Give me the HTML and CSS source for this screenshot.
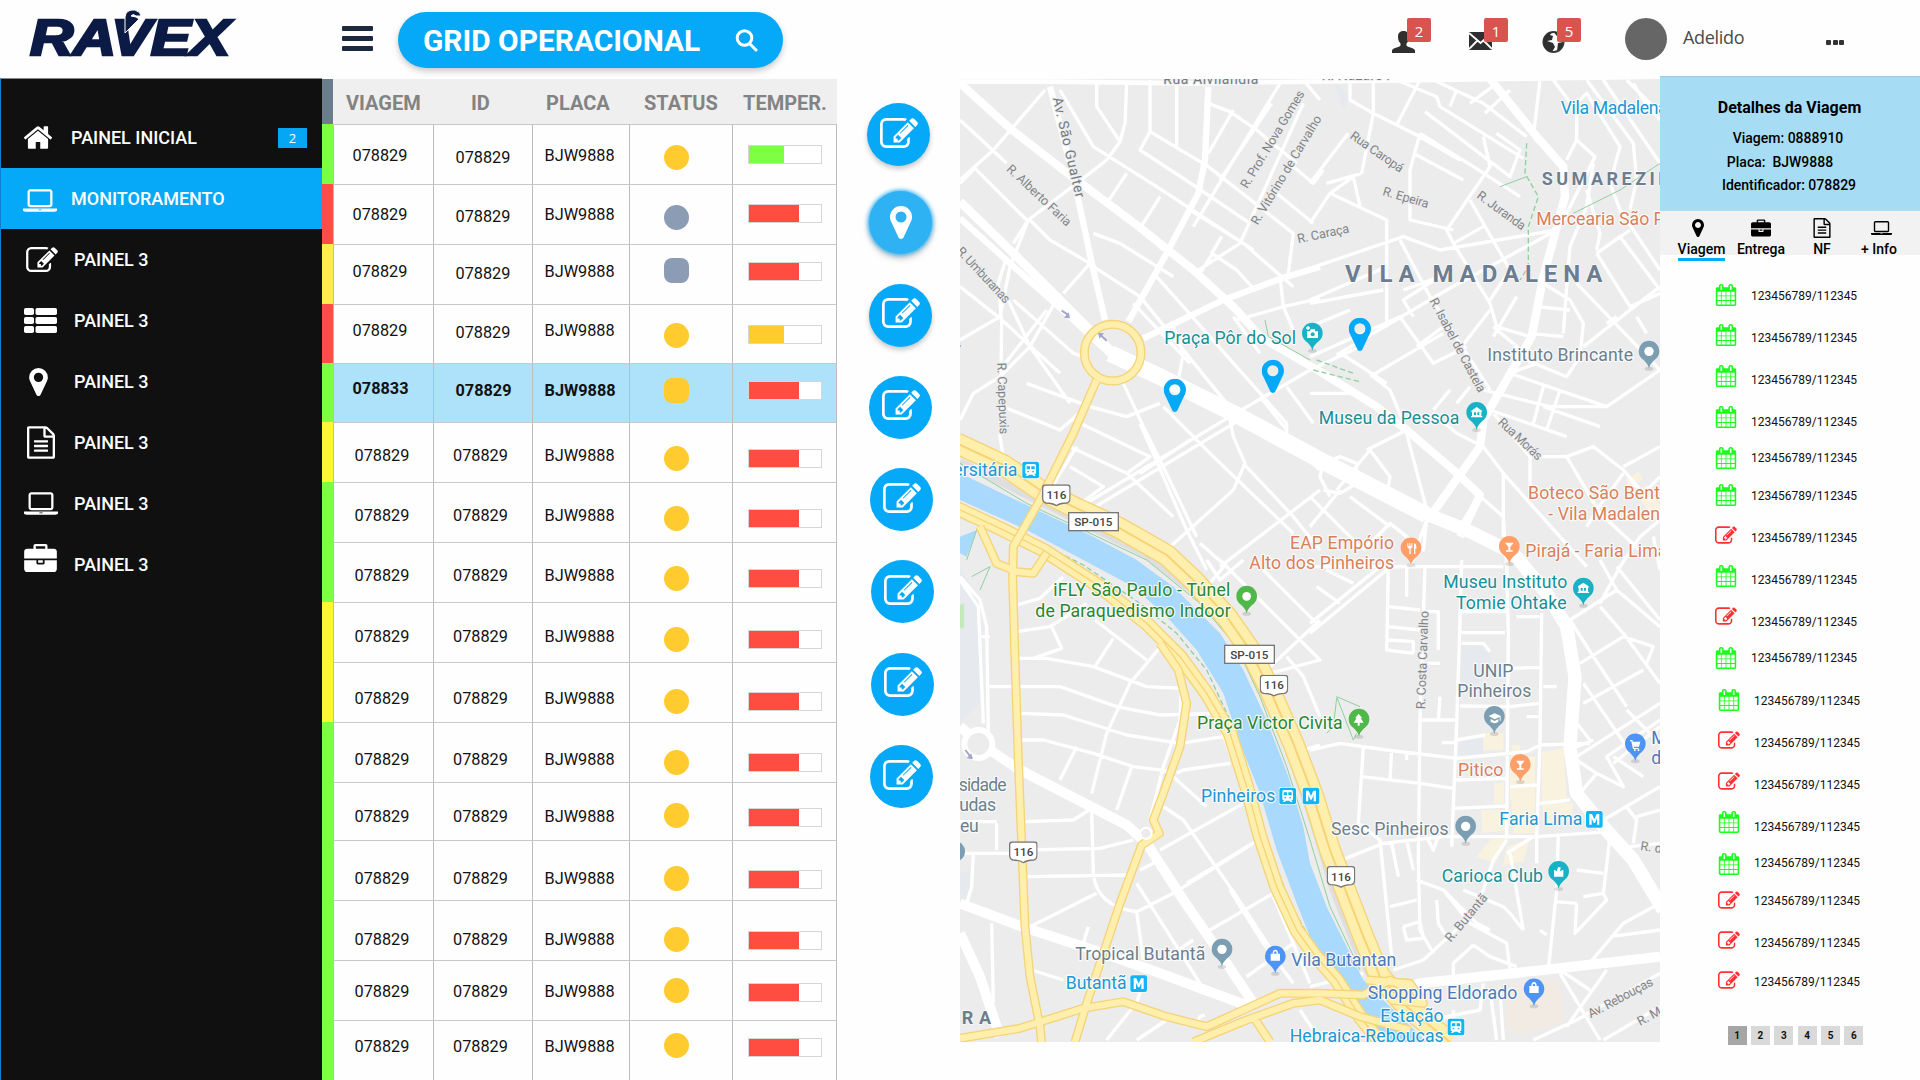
FILE: index.html
```html
<!DOCTYPE html>
<html lang="pt-BR">
<head>
<meta charset="utf-8">
<title>Ravex - Grid Operacional</title>
<link rel="stylesheet" href="styles.css">
</head>
<body>
<svg class="sprite" aria-hidden="true">
  <symbol id="i-home" viewBox="97 253 1598 1283"><path d="M1472 992v480q0 26-19 45t-45 19h-384v-384h-256v384h-384q-26 0-45-19t-19-45v-480q0-1 .5-3t.5-3l575-474 575 474q1 2 1 6zm223-69l-62 74q-8 9-21 11h-3q-13 0-21-7l-692-577-692 577q-12 8-24 7-13-2-21-11l-62-74q-8-10-7-23.5t11-21.5l719-599q32-26 76-26t76 26l244 204v-195q0-14 9-23t23-9h192q14 0 23 9t9 23v408l219 182q10 8 11 21.5t-7 23.5z"/></symbol>
  <symbol id="i-laptop" viewBox="0 256 1920 1280"><path d="M416 1280q-66 0-113-47t-47-113v-704q0-66 47-113t113-47h1088q66 0 113 47t47 113v704q0 66-47 113t-113 47h-1088zm-32-864v704q0 13 9.500 22.500t22.500 9.500h1088q13 0 22.500-9.500t9.500-22.500v-704q0-13-9.500-22.500t-22.500-9.500h-1088q-13 0-22.500 9.500t-9.500 22.500zm1376 928h160v96q0 40-47 68t-113 28h-1600q-66 0-113-28t-47-68v-96h1760zm-720 96q16 0 16-16t-16-16h-160q-16 0-16 16t16 16h160z"/></symbol>
  <symbol id="i-edit" viewBox="0 128 1792 1408"><path d="M888 1184l116-116-152-152-116 116v56h96v96h56zm440-720q-16-16-33 1l-350 350q-17 17-1 33t33-1l350-350q17-17 1-33zm80 594v190q0 119-84.500 203.500t-203.500 84.500h-832q-119 0-203.500-84.500t-84.500-203.500v-832q0-119 84.500-203.500t203.500-84.500h832q63 0 117 25 15 7 18 23 3 17-9 29l-49 49q-14 14-32 8-23-6-45-6h-832q-66 0-113 47t-47 113v832q0 66 47 113t113 47h832q66 0 113-47t47-113v-126q0-13 9-22l64-64q15-15 35-7t20 29zm-96-738l288 288-672 672h-288v-288zm444 132l-92 92-288-288 92-92q28-28 68-28t68 28l152 152q28 28 28 68t-28 68z"/></symbol>
  <symbol id="i-list" viewBox="0 0 33 25"><rect width="10" height="7" rx="1.800"/><rect x="11.500" width="21.500" height="7" rx="1.800"/><rect y="9" width="10" height="7" rx="1.800"/><rect x="11.500" y="9" width="21.500" height="7" rx="1.800"/><rect y="18" width="10" height="7" rx="1.800"/><rect x="11.500" y="18" width="21.500" height="7" rx="1.800"/></symbol>
  <symbol id="i-pin" viewBox="384 128 1024 1536"><path d="M1152 640q0-106-75-181t-181-75-181 75-75 181 75 181 181 75 181-75 75-181zm256 0q0 109-33 179l-364 774q-16 33-47.500 52t-67.500 19-67.500-19-46.500-52l-365-774q-33-70-33-179 0-212 150-362t362-150 362 150 150 362z"/></symbol>
  <symbol id="i-file" viewBox="128 0 1536 1792"><path d="M1596 380q28 28 48 76t20 88v1152q0 40-28 68t-68 28h-1344q-40 0-68-28t-28-68v-1600q0-40 28-68t68-28h896q40 0 88 20t76 48zm-444-244v376h376q-10-29-22-41l-313-313q-12-12-41-22zm384 1528v-1024h-416q-40 0-68-28t-28-68v-416h-768v1536h1280zm-1024-864q0-14 9-23t23-9h704q14 0 23 9t9 23v64q0 14-9 23t-23 9h-704q-14 0-23-9t-9-23v-64zm736 224q14 0 23 9t9 23v64q0 14-9 23t-23 9h-704q-14 0-23-9t-9-23v-64q0-14 9-23t23-9h704zm0 256q14 0 23 9t9 23v64q0 14-9 23t-23 9h-704q-14 0-23-9t-9-23v-64q0-14 9-23t23-9h704z"/></symbol>
  <symbol id="i-case" viewBox="0 0 1792 1536"><path d="M640 256h512v-128h-512v128zm1152 640v480q0 66-47 113t-113 47h-1472q-66 0-113-47t-47-113v-480h672v160q0 26 19 45t45 19h320q26 0 45-19t19-45v-160h672zm-768 0v128h-256v-128h256zm768-480v384h-1792v-384q0-66 47-113t113-47h352v-160q0-40 28-68t68-28h576q40 0 68 28t28 68v160h352q66 0 113 47t47 113z"/></symbol>
  <symbol id="i-cal" viewBox="64 0 1664 1792"><path d="M192 1664h288v-288h-288v288zm352 0h320v-288h-320v288zm-352-352h288v-320h-288v320zm352 0h320v-320h-320v320zm-352-384h288v-288h-288v288zm736 736h320v-288h-320v288zm-384-736h320v-288h-320v288zm768 736h288v-288h-288v288zm-384-352h320v-320h-320v320zm-352-864v-288q0-13-9.500-22.500t-22.500-9.500h-64q-13 0-22.500 9.500t-9.500 22.500v288q0 13 9.500 22.500t22.500 9.500h64q13 0 22.500-9.500t9.500-22.500zm736 864h288v-320h-288v320zm-384-384h320v-288h-320v288zm384 0h288v-288h-288v288zm32-480v-288q0-13-9.500-22.500t-22.500-9.500h-64q-13 0-22.500 9.500t-9.500 22.500v288q0 13 9.500 22.500t22.500 9.500h64q13 0 22.500-9.500t9.500-22.500zm384-64v1280q0 52-38 90t-90 38h-1408q-52 0-90-38t-38-90v-1280q0-52 38-90t90-38h128v-96q0-66 47-113t113-47h64q66 0 113 47t47 113v96h384v-96q0-66 47-113t113-47h64q66 0 113 47t47 113v96h128q52 0 90 38t38 90z"/></symbol>
  <symbol id="m-pin" viewBox="-32 -32 64 86" overflow="visible"><ellipse class="pin-shadow" cx="0" cy="52" rx="13" ry="6"/><path d="M0 52C-3 38-10 32-20 23A31 31 0 1 1 20 23C10 32 3 38 0 52z"/></symbol>
  <symbol id="m-metro" viewBox="0 0 54 54"><rect width="54" height="54" rx="8" fill="#fff"/><rect x="2" y="2" width="50" height="50" rx="6" fill="#12b5f5"/><path d="M12 43V11h8l7 16 7-16h8v32h-7V24l-6 14h-4l-6-14v19z" fill="#fff"/></symbol>
  <symbol id="m-train" viewBox="0 0 54 54"><rect width="54" height="54" rx="8" fill="#fff"/><rect x="2" y="2" width="50" height="50" rx="6" fill="#12b5f5"/><path fill-rule="evenodd" d="M11 14q0-5 6-5h20q6 0 6 5v22q0 4-5 4l4 5h-6l-4-4H22l-4 4h-6l4-5q-5 0-5-4zM15 16v9h10v-9zm14 0v9h10v-9zM17 30v4h5v-4zm15 0v4h5v-4z" fill="#fff"/></symbol>
  <symbol id="m-shield" viewBox="0 0 86 66"><path d="M10 2H76Q84 2 84 10V42Q84 54 74 56Q54 56 43 64Q32 56 12 56Q2 54 2 42V10Q2 2 10 2z" fill="#fff" stroke="#777" stroke-width="4"/><text x="43" y="44" font-size="35" font-weight="500" text-anchor="middle" fill="#444">116</text></symbol>
</svg>

<header class="topbar">
  <svg class="logo" viewBox="0 0 230 60" role="img" aria-label="Ravex">
    <text class="logo-text" transform="translate(6 47) scale(1.2 1)" textLength="167">RAVEX</text>
    <path d="M101 25V9Q102 1 111 2q6 2 6 6h-5q-3-3-5 0l5 1 3 2z" class="logo-hook"/>
  </svg>
  <button class="burger" aria-label="Menu"><span></span><span></span><span></span></button>
  <div class="search-pill"><h1>GRID OPERACIONAL</h1>
    <svg viewBox="0 0 23 23"><circle cx="9.500" cy="9" r="7.300"/><path d="M14.500 14.500l6.500 6.500"/></svg>
  </div>
  <nav class="notices">
    <a class="notice"><svg viewBox="0 0 23 22"><path d="M11.500 0c4 0 5.500 2.500 5.500 6 0 3-1 5-2.500 6.500v2c1 2 8.500 2 8.500 5.500v2H0v-2c0-3.500 7.500-3.500 8.500-5.500v-2C7 11 6 9 6 6c0-3.500 1.500-6 5.500-6z"/></svg><b>2</b></a>
    <a class="notice"><svg viewBox="0 0 23 22"><path d="M0 1h23v18H0z"/><path d="M0 2l11.500 10L23 2M0 18l8-8M23 18l-8-8" fill="none" stroke="#fff" stroke-width="1.800"/></svg><b>1</b></a>
    <a class="notice"><svg viewBox="0 0 23 22"><circle cx="11.500" cy="11" r="10" fill="#fff" stroke="#3a3a3a" stroke-width="2"/><path d="M2 7Q5 1 10 1L8 4l3 1-1 4-5 1 6 2 2 4-3 5Q2 19 1 12zM16 12l5-1q0 6-6 9zM12 1q7 1 9 7l-4-1-3-3z"/></svg><b>5</b></a>
  </nav>
  <div class="avatar"></div><span class="user">Adelido</span>
  <div class="more"><i></i><i></i><i></i></div>
</header>

<main class="layout">
  <aside class="sidebar">
    <a class="item first"><span class="ico"><svg class="w28"><use href="#i-home"/></svg></span>PAINEL INICIAL<em>2</em></a>
    <a class="item active"><span class="ico low"><svg class="w34"><use href="#i-laptop"/></svg></span>MONITORAMENTO</a>
    <a class="item"><span class="ico"><svg class="w32"><use href="#i-edit"/></svg></span>PAINEL 3</a>
    <a class="item"><span class="ico"><svg class="w33"><use href="#i-list"/></svg></span>PAINEL 3</a>
    <a class="item"><span class="ico"><svg class="w19"><use href="#i-pin"/></svg></span>PAINEL 3</a>
    <a class="item"><span class="ico"><svg class="w28 tall"><use href="#i-file"/></svg></span>PAINEL 3</a>
    <a class="item"><span class="ico"><svg class="w34"><use href="#i-laptop"/></svg></span>PAINEL 3</a>
    <a class="item"><span class="ico high"><svg class="w33 case"><use href="#i-case"/></svg></span>PAINEL 3</a>
  </aside>

  <section class="grid">
    <div class="thead"><i></i><b>VIAGEM</b><b>ID</b><b>PLACA</b><b>STATUS</b><b>TEMPER.</b></div>
    <div class="row green"><i></i><span>078829</span><span>078829</span><span>BJW9888</span><div><u class="dot"></u></div><div><s class="bar ok"></s></div></div>
    <div class="row red"><i></i><span>078829</span><span>078829</span><span>BJW9888</span><div><u class="dot off"></u></div><div><s class="bar"></s></div></div>
    <div class="row yellow"><i></i><span>078829</span><span>078829</span><span>BJW9888</span><div><u class="dot off sq"></u></div><div><s class="bar"></s></div></div>
    <div class="row red"><i></i><span>078829</span><span>078829</span><span>BJW9888</span><div><u class="dot"></u></div><div><s class="bar warn"></s></div></div>
    <div class="row green selected"><i></i><span>078833</span><span>078829</span><span>BJW9888</span><div><u class="dot sq"></u></div><div><s class="bar"></s></div></div>
    <div class="row bright"><i></i><span>078829</span><span>078829</span><span>BJW9888</span><div><u class="dot"></u></div><div><s class="bar"></s></div></div>
    <div class="row green"><i></i><span>078829</span><span>078829</span><span>BJW9888</span><div><u class="dot"></u></div><div><s class="bar"></s></div></div>
    <div class="row green"><i></i><span>078829</span><span>078829</span><span>BJW9888</span><div><u class="dot"></u></div><div><s class="bar"></s></div></div>
    <div class="row bright"><i></i><span>078829</span><span>078829</span><span>BJW9888</span><div><u class="dot"></u></div><div><s class="bar"></s></div></div>
    <div class="row bright"><i></i><span>078829</span><span>078829</span><span>BJW9888</span><div><u class="dot"></u></div><div><s class="bar"></s></div></div>
    <div class="row green"><i></i><span>078829</span><span>078829</span><span>BJW9888</span><div><u class="dot"></u></div><div><s class="bar"></s></div></div>
    <div class="row green"><i></i><span>078829</span><span>078829</span><span>BJW9888</span><div><u class="dot"></u></div><div><s class="bar"></s></div></div>
    <div class="row green"><i></i><span>078829</span><span>078829</span><span>BJW9888</span><div><u class="dot"></u></div><div><s class="bar"></s></div></div>
    <div class="row green"><i></i><span>078829</span><span>078829</span><span>BJW9888</span><div><u class="dot"></u></div><div><s class="bar"></s></div></div>
    <div class="row green"><i></i><span>078829</span><span>078829</span><span>BJW9888</span><div><u class="dot"></u></div><div><s class="bar"></s></div></div>
    <div class="row green"><i></i><span>078829</span><span>078829</span><span>BJW9888</span><div><u class="dot"></u></div><div><s class="bar"></s></div></div>
  </section>

  <nav class="actions">
    <button class="shadow"><svg><use href="#i-edit"/></svg></button>
    <button class="glow"><svg><use href="#i-pin"/></svg></button>
    <button class="shadow"><svg><use href="#i-edit"/></svg></button>
    <button><svg><use href="#i-edit"/></svg></button>
    <button><svg><use href="#i-edit"/></svg></button>
    <button><svg><use href="#i-edit"/></svg></button>
    <button><svg><use href="#i-edit"/></svg></button>
    <button><svg><use href="#i-edit"/></svg></button>
  </nav>

  <svg class="map" viewBox="0 27 2100 2889">
    <rect y="27" width="2100" height="2889" fill="#ececec"/>
    <path fill="#e6eaee" d="M0 1490L60 1600V1900L0 1960zM1505 1725l80 5 10 50-60 90h-35zM1500 2010l70-10v50l-75 5zM0 2410l30-10v90H0zM1120 30l50 50-20 40z"/>
    <path fill="#c5eab9" d="M0 1605l12-5v75H0z"/>
    <path fill="#f8f2df" d="M1570 1990h60v50h-60zM1602 2140h30v60h-30zM1655 2025h25v45h-25zM1650 2060h75v130h-75zM1745 2045l65-10 10 150-75 10zM1655 2160h70v80h-70zM1563 2220h75v60l-70 10zM1745 2200l95 0-5 40-80 20zM1550 2360l40-50 60-10-45 80zM1640 2330l70-25-20 70-60 10zM1995 1230l40-25 15 20-40 30zM2020 1265l40-20 40 60v60zM1660 2230h65v60h-65z"/>
    <path fill="#f1ebe4" d="M1645 2740l150-15 20 130-60 20-80 20-40-30z"/>

    <g class="streets">
      <path d="M0 330L100 240 255 60M0 340L45 295 200 450M0 150L140 280M300 60L400 230 590 350 880 540M410 30L410 110 480 215 495 160 500 40M480 215L440 270 350 340 205 450 160 520M210 450L270 510 390 580 310 670M140 560L115 640 125 760 120 1100 130 1160M205 450L150 590 120 740M570 30L570 185 540 240 700 345 870 460M650 40V235M570 185L745 290 1000 490 985 610M500 310L440 400 560 480M600 380L540 475 610 540M820 120L745 250M935 100L780 330M745 100L810 125 890 180 1010 280M960 40L700 470M690 420L850 520 1000 650M1030 100L840 520M840 520L700 610M785 500L755 550 830 600 880 655M720 610L755 555M1060 460L950 370M400 490L480 520 640 620M400 590L540 680 800 1000 820 1100 855 1180 820 1260M590 620L980 1060V1110L1080 1200M640 770L670 850 655 930M520 700L690 880M300 670L210 830 120 920 40 970 0 1050M120 740L0 810M140 680L210 830 330 1000M0 650L120 745 300 910M160 690L340 850 370 860M200 940L390 1010 500 1040 600 1000M130 1010L300 1080 380 1010M260 720L120 900M340 1050L570 1160 500 1210M330 1130L500 1210 640 1340M330 1190L430 1250 350 1310M270 1260L350 1130M540 1060L680 1380 740 1500M490 940L550 1070 600 1170 710 1400M370 1305L810 1040 1050 900 1200 830M390 1320L830 1055M610 1010L760 1160 1000 1390M1080 1260L780 1490M690 1110L540 1210M820 1260L620 1440M720 1420L800 1490M850 1180L1000 1340 1080 1440M980 950L1060 1060M900 980L980 1080M820 740L900 850M830 750L970 710 1080 685M960 620L970 710 1000 780M1000 290L1060 340 1090 300M1030 30L1080 90"/>
    </g>
    <g class="streets" transform="translate(1050 0)">
      <path d="M120 40L120 90 190 130 320 195 450 270M190 30L190 130 155 310M330 30L260 165M260 30L380 80 390 110 640 265M440 60L420 110M370 30L520 100 650 200M480 100L560 40M525 130L600 60M345 125L600 320 630 240 560 190M520 200L540 290 410 480 430 520M330 190L300 300 300 450 430 480M310 250L460 330M330 190L490 290 630 380M0 340L115 190M155 310L50 340M130 320L60 370 230 450 230 770M130 320L150 410M60 370L0 460M480 390L600 600 540 690M410 480L430 520 540 700 560 770 660 800M430 520L520 470M0 595L280 500 390 540 740 480M0 690L230 590M0 700L220 660M270 510L360 680 540 960M280 660L390 620 280 690 310 740M0 860L270 740 370 880 470 830M80 855L410 660 740 480M0 770L120 720M180 920L400 790M320 830L400 770M190 920L240 960 290 1080 170 1140M0 970L150 970M370 1030L440 1090 520 1130M370 1020L420 960M440 1000L480 950M100 855L230 940M620 680L550 800M540 720L440 850M680 710L780 720M660 790L760 800M700 640L780 690 820 760 810 860 770 920 600 850M770 650L760 790M550 770L680 880 600 910 890 1010 1050 900M520 960L720 1010 890 1010M540 1020L770 1100M700 950L670 1060M750 960L710 1080M700 1010L870 1070M800 640L1050 900M690 30L670 200M730 30L790 110 830 70 930 230 900 340 930 420 1050 600M830 30L970 220 980 330 960 420M880 30L1050 280M950 30L1050 130M970 40L1000 90 1050 150M770 270L800 210 855 260 760 450M800 210V110M850 280L830 410 780 530 770 650M860 550L960 480M860 550L960 710 1050 670M860 550L930 500 1050 660M830 360L870 490 860 540M890 760L920 740M980 740L1010 790M1050 650L820 830M550 1030L660 1160 770 1160 850 1130 940 1200 1000 1270 1050 1220M660 1160L660 1260M770 1160L870 1330 1000 1450M940 1210L860 1320 830 1370M940 1190L1050 1130M1020 1290L960 1230M520 1130L580 1210 580 1400M580 1210L830 1490M510 1270L450 1370M500 1270L580 1340 590 1490M180 1140L240 1220 230 1280M60 1280L30 1220 40 1180 90 1160 140 1180 140 1240 90 1270 40 1260M120 1280L240 1370M290 1090L350 1320M180 1140L80 1260M0 1280L150 1430M350 1350L340 1440 240 1360 160 1440M0 1370L90 1260M350 1350L300 1490M0 1490H580M930 1490L990 1400 1050 1350M1030 1400L1050 1500"/>
    </g>
    <g class="streets" transform="translate(0 1470)">
      <path d="M0 50L60 120 80 200 85 520M0 60L55 140 70 490M60 230H90M85 380H170M170 135L240 115 310 50M170 215L270 200 380 130M275 200L305 265 220 295M175 295H260L400 320 560 380 670 385M405 180L560 300M460 235L405 320M610 250L510 370 440 520 395 700M175 380H300L470 440 600 465 780 460M180 460L310 465 500 525 660 550 790 530M185 540H250L400 580 520 620 640 635M350 560L300 660M515 620L470 750M630 260L665 350 660 480 610 620 570 780M640 650L740 740M650 640L670 630 810 610M670 310L760 440 860 720M195 785L340 780 395 745M395 750L400 940Q410 1040 530 1055L640 1000 880 850M195 870L420 865 520 840M200 950L510 945M0 880H150M110 790V870M0 785H110M40 880L35 980 20 1030M210 1100L410 1000M530 1055L550 1200M530 970L720 1270M610 740L670 780 830 1010 960 1210M600 870L850 730M680 970L910 830M750 1110L940 1000M810 990L910 1150 1000 1270M860 1250L1000 1150M700 1140L640 1180M540 930L600 900M940 1010L1000 1150 1050 1270M95 1090L100 1330M370 1150L385 1100M215 1230L310 1260M550 1260L530 1330M780 1180L860 1310M440 1440L520 1340M530 1440L620 1380M710 1390L720 1370 735 1365M800 10L740 80M740 0L780 60 850 0M880 100L1080 300 930 340M930 320L1080 180M980 290L1030 350 1080 470M910 30L1080 200M1030 570L1080 555M780 0L880 100M1020 1350L1060 1410"/>
    </g>
    <g class="streets" transform="translate(1050 1470)">
      <path d="M0 190L210 20 330 20M0 220L230 30M50 30L130 70M20 80L90 130M235 20L230 270 310 280M235 140L330 150M235 200L330 210M235 240L310 245V280M345 20L330 480 325 900 330 1110 370 1180M290 20V110M345 155H385V270M340 310H390M455 0L450 180 440 490 425 860M450 155H590M450 218H585M455 250H520L540 275M590 0L595 220 590 830M620 170H700M695 160L690 540 680 830M600 325L690 322M700 380H740M450 438L600 440 690 430M650 470H690M335 480H440M390 410L385 480M440 540L525 525M395 548H440M0 570L90 550 230 570 440 595 650 575 690 555 840 550M160 560L145 790 210 840 245 1190M245 570L240 660M290 580V600M155 650L330 670 430 685M435 660L590 655M430 745L590 738M600 680L680 675M690 730L780 720M70 910L220 850 400 830 680 830 900 815M245 850L265 950M290 840L310 930M350 830L370 870 385 830M320 960L400 990 500 1090 540 1110M590 840L550 900 520 990 470 1080 340 1200 250 1230M590 880L670 830M600 880L640 1110M460 990L580 1040 600 1060 640 1110M400 990L480 1090 590 1150 600 1230M490 1155L540 1190 620 1220M490 1155L430 1210V1260M380 1020L385 1090 410 1130M280 1100L330 1085 340 1135 290 1140 280 1100M240 1040L320 1020M680 830V910M745 820L740 990 715 1230M735 1025L800 1030M800 1030L795 1120 890 1020 880 1000 900 830M800 930L880 940M690 1110L710 1125M820 1010L880 1000M830 1220L940 1090 1050 1030M900 1130L1050 1110M750 1240L870 1440M750 1230L840 1290M890 1230L770 1400M670 1440L800 1380 1050 1240M880 1440L1050 1340M540 1290L560 1440M570 1290L580 1440M360 1380L510 1350 520 1270M430 1380V1350M0 1280L160 1240M780 180L920 90 1050 200M870 0L920 90M930 20L870 130M870 140L940 220 1050 370M920 20L1050 180M940 230L810 310M940 230L1030 260 1010 310M780 180L850 290 950 440M1000 330L820 430M820 370L950 560M800 590L1050 430M800 560L850 540M800 490L840 540M1050 480L890 590 940 680 860 640 810 700M910 590L1000 650M1050 500L910 610M950 450L1030 530M880 780L1050 680M950 740L980 780 970 850M980 770L1050 750M800 600L860 640M960 860L1050 850"/>
    </g>

    <g class="majors">
      <path class="w14" d="M0 35H270L700 40 2100 20"/>
      <path class="w22" d="M0 40L150 175 310 300 530 465 700 600 830 720 900 800 1080 905 1250 1010 1340 1080 1480 1200 1560 1275 1500 1400"/>
      <path class="w24" d="M0 395L150 540 390 780 480 870"/>
      <path class="w18" d="M0 445L150 580 330 740 480 880"/>
      <path class="w50" d="M450 850L600 920 830 1035 1080 1170 1400 1335"/>
      <path class="w40" d="M1380 1325L1520 1380 1660 1450 1760 1570 1820 1670 1845 1820 1830 2030 1850 2170 1930 2270 2020 2370 2110 2520"/>
      <path class="w18" d="M270 50L340 320 400 600 435 750M745 50L735 270 715 370 620 550 505 755"/>
      <path class="w18" d="M550 805L790 690 965 625 1080 590"/>
      <path class="w26" d="M1585 20L1730 200 1810 290 1815 380 1750 620 1715 800 1570 1050 1560 1130 1410 1340"/>
      <path class="w30" d="M0 1970L60 2020 180 2100 500 2265 560 2320 670 2490 780 2650 880 2800"/>
      <path class="w30" d="M0 2500L200 2575 430 2650 600 2710 870 2810M0 2590L60 2720 120 2900M1290 2770L1380 2740 1750 2700 2100 2660"/>
      <circle cx="55" cy="2022" r="42" class="ring"/>
    </g>

    <path class="water" d="M0 1210L200 1305 400 1400 530 1470 640 1550 780 1690 850 1800 920 1950 985 2120 1030 2270 1050 2380 1100 2510 1160 2630 1210 2730 1290 2810 1400 2916H1270L1200 2810 1130 2710 1050 2600 1010 2500 950 2340 900 2170 840 2020 790 1870 710 1740 620 1640 520 1550 370 1470 200 1380 0 1290zM0 1400L50 1380 20 1460 0 1450z"/>
    <path class="rail" d="M0 1175L240 1295 560 1455 720 1580 840 1710 920 1860 990 2050 1060 2260 1120 2460 1190 2640 1260 2770"/>
    <path class="park" d="M0 1180L200 1300 560 1470 720 1600 830 1730 900 1880 980 2090 1050 2310 1110 2510 1200 2700"/>
    <path class="park dashed" d="M0 1305L180 1390 370 1485 540 1600 650 1690 740 1800 810 1950 860 2100 920 2310 990 2500 1080 2660"/>
    <path class="park dashed" d="M1700 220L1695 310 1735 380 1705 470V590L1680 630M1060 900L1200 935M1070 870L1180 910"/>
    <path class="park" d="M915 750L925 800 1050 870M1620 350L1700 320M1840 430L1980 360 2100 280M1130 1880L1180 2010 1190 1990M1130 1880L1200 1910M1130 1885L1120 1970 1100 1990M35 1520L90 1490 60 1560M20 1470L50 1380"/>

    <g class="hw-edge"><path id="hw1" d="M-10 1120L130 1185 240 1260 350 1315 480 1375 620 1455 700 1530 800 1640 870 1740 930 1860 1000 2020 1060 2180 1110 2340 1160 2470 1210 2600 1260 2720 1340 2810 1470 2916"/></g>
    <use href="#hw1" class="hw-fill"/><use href="#hw1" class="hw-mid"/>
    <g class="hw2-edge"><path id="hw2" d="M-10 1315L120 1375 250 1440 420 1550 560 1660 660 1760 740 1870 810 1990 860 2150 900 2300 950 2450 1010 2580 1060 2650 1130 2730 1200 2840 1260 2916"/></g>
    <use href="#hw2" class="hw2-fill"/><use href="#hw2" class="hw2-mid"/>
    <g class="yr-edge"><g id="yr">
      <path d="M410 930L340 1090 240 1290 160 1430 158 1530 165 1770 175 2070 185 2320 195 2570 210 2720 240 2870 245 2920"/>
      <circle cx="458" cy="848" r="85"/>
      <path d="M600 1720L655 1800 680 1900 660 2030 610 2170 580 2250 598 2290 545 2325 480 2500 430 2650 380 2800 345 2916"/>
      <path d="M0 2905L180 2875 370 2815 490 2795 620 2840 740 2870 850 2820 960 2770 1080 2770 1210 2775 1290 2730 1350 2760"/>
      <path d="M700 2916L860 2850 1000 2800 1080 2790 1200 2840 1350 2880M880 2840L930 2916M60 1370L110 1480 170 1505 220 1510 260 1450M1220 2730L1350 2740 1390 2800 1290 2790"/>
    </g></g>
    <use href="#yr" class="yr-fill"/>
    <circle cx="558" cy="2290" r="17" fill="#ececec" stroke="#fff" stroke-width="6"/>
    <path d="M305 722l22 14M440 812l-22-20M16 2040l20 26" stroke="#a3a6c9" stroke-width="6"/>
    <path d="M330 745l-18-2 14-16zM414 788l18 2-14 16zM38 2068l-18-4 14-14z" fill="#a3a6c9"/>

    <g class="labels road">
      <text class="dark" transform="translate(610 43)" textLength="285">Rua Alvilândia</text>
      <text class="dark" transform="translate(1085 31)" textLength="220">R. Nazaré P</text>
      <text transform="translate(278 85) rotate(77)" class="dark" textLength="308">Av. São Gualter</text>
      <text transform="translate(137 300) rotate(43)" textLength="250">R. Alberto Faria</text>
      <text transform="translate(-12 545) rotate(47)" textLength="215">R. Umburanas</text>
      <text transform="translate(112 878) rotate(88)" textLength="215">R. Capepuxis</text>
      <text transform="translate(862 358) rotate(-59)" textLength="335">R. Prof. Nova Gomes</text>
      <text transform="translate(893 467) rotate(-59)" textLength="375">R. Vitórino de Carvalho</text>
      <text transform="translate(1015 520) rotate(-12)" textLength="158">R. Caraça</text>
      <text transform="translate(1168 203) rotate(35)" textLength="185">Rua Caropá</text>
      <text transform="translate(1266 375) rotate(16)" textLength="142">R. Epeira</text>
      <text transform="translate(1548 382) rotate(36)" textLength="170">R. Juranda</text>
      <text transform="translate(1408 692) rotate(62)" textLength="315">R. Isabel de Castela</text>
      <text transform="translate(1612 1060) rotate(43)" textLength="165">Rua Morás</text>
      <text transform="translate(1395 1918) rotate(-88)" textLength="295">R. Costa Carvalho</text>
      <text transform="translate(1472 2618) rotate(-50)" textLength="175">R. Butantã</text>
      <text transform="translate(1892 2845) rotate(-28)" textLength="215">Av. Rebouças</text>
      <text transform="translate(2040 2868) rotate(-28)">R. Mo</text>
      <text transform="translate(2040 2340) rotate(8)">R. de</text>
      <text transform="translate(-12 838) rotate(-30)">e</text>
    </g>
    <g class="labels area">
      <text x="1745" y="344" font-size="54" textLength="388">SUMAREZIN</text>
      <text x="1155" y="636" font-size="72" textLength="772">VILA MADALENA</text>
      <text x="5" y="2862" font-size="54" textLength="88">RA</text>
    </g>
    <g class="labels teal">
      <text x="613" y="822" textLength="395">Praça Pôr do Sol</text>
      <text x="1076" y="1061" textLength="422">Museu da Pessoa</text>
      <text x="1450" y="1555" textLength="372">Museu Instituto</text>
      <text x="1488" y="1616" textLength="332">Tomie Ohtake</text>
      <text x="1445" y="2436" textLength="304">Carioca Club</text>
    </g>
    <g class="labels slate">
      <text x="1582" y="873" textLength="437">Instituto Brincante</text>
      <text x="1540" y="1820" textLength="120">UNIP</text>
      <text x="1492" y="1882" textLength="222">Pinheiros</text>
      <text x="1113" y="2296" textLength="353">Sesc Pinheiros</text>
      <text x="346" y="2670" textLength="390">Tropical Butantã</text>
      <text x="-4" y="2162" textLength="144">sidade</text>
      <text x="-2" y="2224" textLength="110">udas</text>
      <text x="0" y="2286" textLength="56">eu</text>
    </g>
    <g class="labels orange">
      <text x="1729" y="466" textLength="385">Mercearia São P</text>
      <text x="1704" y="1287" textLength="396">Boteco São Bent</text>
      <text x="1765" y="1349" textLength="335">- Vila Madalen</text>
      <text x="990" y="1437" textLength="312">EAP Empório</text>
      <text x="868" y="1497" textLength="434">Alto dos Pinheiros</text>
      <text x="1696" y="1460" textLength="426">Pirajá - Faria Lima</text>
      <text x="1494" y="2117" textLength="136">Pitico</text>
    </g>
    <g class="labels green">
      <text x="280" y="1579" textLength="531">iFLY São Paulo - Túnel</text>
      <text x="226" y="1641" textLength="586">de Paraquedismo Indoor</text>
      <text x="711" y="1977" textLength="437">Praça Victor Civita</text>
    </g>
    <g class="labels transit">
      <text x="1802" y="133" textLength="321">Vila Madalena</text>
      <text x="-20" y="1218" textLength="192">ersitária</text>
      <text x="723" y="2195" textLength="223">Pinheiros</text>
      <text x="1618" y="2265" textLength="249">Faria Lima</text>
      <text x="317" y="2758" textLength="183">Butantã</text>
      <text x="1261" y="2855" textLength="190">Estação</text>
      <text x="989" y="2917" textLength="462">Hebraica-Rebouças</text>
    </g>
    <g class="labels shop">
      <text x="994" y="2688" textLength="315">Vila Butantan</text>
      <text x="1223" y="2786" textLength="449">Shopping Eldorado</text>
      <text x="2074" y="2021">Mo</text><text x="2074" y="2082">de</text>
    </g>

    <use href="#m-train" x="185" y="1172" width="54" height="56"/>
    <use href="#m-train" x="956" y="2150" width="54" height="56"/>
    <use href="#m-metro" x="1026" y="2150" width="54" height="56"/>
    <use href="#m-metro" x="1876" y="2220" width="54" height="56"/>
    <use href="#m-metro" x="509" y="2713" width="54" height="56"/>
    <use href="#m-train" x="1461" y="2843" width="54" height="56"/>
    <use href="#m-shield" x="246" y="1243" width="86" height="66"/>
    <use href="#m-shield" x="899" y="1814" width="86" height="66"/>
    <use href="#m-shield" x="147" y="2314" width="86" height="66"/>
    <use href="#m-shield" x="1100" y="2388" width="86" height="66"/>
    <g class="plate"><rect x="326" y="1328" width="149" height="54"/><text x="400" y="1368">SP-015</text><rect x="794" y="1726" width="149" height="54"/><text x="868" y="1766">SP-015</text></g>

    <g fill="#18b2c6">
      <use href="#m-pin" x="1025" y="758" width="64" height="86"/><use href="#m-pin" x="1518" y="996" width="64" height="86"/><use href="#m-pin" x="1838" y="1523" width="64" height="86"/><use href="#m-pin" x="1764" y="2373" width="64" height="86"/>
    </g>
    <g fill="#7c9eb2">
      <use href="#m-pin" x="2035" y="812" width="64" height="86"/><use href="#m-pin" x="1571" y="1908" width="64" height="86"/><use href="#m-pin" x="1485" y="2237" width="64" height="86"/><use href="#m-pin" x="754" y="2606" width="64" height="86"/><use href="#m-pin" x="-48" y="2313" width="64" height="86"/>
    </g>
    <g fill="#ff9e67">
      <use href="#m-pin" x="1321" y="1402" width="64" height="86"/><use href="#m-pin" x="1616" y="1398" width="64" height="86"/><use href="#m-pin" x="1649" y="2052" width="64" height="86"/>
    </g>
    <g fill="#4fb848"><use href="#m-pin" x="828" y="1547" width="64" height="86"/><use href="#m-pin" x="1165" y="1916" width="64" height="86"/></g>
    <g fill="#4d94f5"><use href="#m-pin" x="914" y="2627" width="64" height="86"/><use href="#m-pin" x="1690" y="2725" width="64" height="86"/><use href="#m-pin" x="1994" y="1990" width="64" height="86"/></g>
    <g fill="#fff">
      <circle cx="860" cy="1579" r="13"/><circle cx="2067" cy="844" r="14"/><circle cx="1517" cy="2269" r="14"/><circle cx="786" cy="2638" r="14"/><circle cx="-16" cy="2345" r="14"/>
      <path d="M1041 784h10v-6h14v6h9v20h-33zM1038 772h4v-4h4v4h4v4h-4v4h-4v-4h-4zM1534 1022l16-11 16 11v4h-2v12h3v4h-34v-4h3v-12h-2zM1854 1549l16-11 16 11v4h-2v12h3v4h-34v-4h3v-12h-2zM1782 2412h28v8h-28zM1782 2399l8 5 4-12h8l-2 12 10-5v14h-28z"/>
      <path d="M1586 1938l18-8 18 8v14h-3v-11l-15 7zM1592 1947l12 6 11-6v9q-11 7-23 0zM1342 1420h3v8h3v-8h3v8h3v-8h3v12l-5 5v15h-4v-15l-6-5zM1362 1420q8 0 7 16h-3v16h-4zM1635 1418h26l-10 13v10h7v4h-20v-4h7v-10zM1668 2072h26l-10 13v10h7v4h-20v-4h7v-10zM1196 1931l11 14h-5l9 13h-12v9h-6v-9h-12l9-13h-5z"/>
      <path d="M932 2651h28v21h-28zM938 2651q0-12 8-12t8 12h-4q0-7-4-7t-4 7zM1708 2748h28v21h-28zM1714 2748q0-12 8-12t8 12h-4q0-7-4-7t-4 7zM2010 2010h7l2 5h22l-4 15h-15l1 4h13v3h-17l-5-23h-4zM2022 2038h5v5h-5zM2033 2038h5v5h-5z"/>
    </g>
    <g fill="#18b2c6"><path d="M1542 1027h6v8h-6zM1552 1027h6v8h-6zM1862 1554h6v8h-6zM1872 1554h6v8h-6z"/><circle cx="1058" cy="793" r="6"/></g>
    <g class="vehicle"><use href="#i-pin" x="611" y="926" width="67" height="100"/><use href="#i-pin" x="905" y="869" width="67" height="100"/><use href="#i-pin" x="1166" y="743" width="67" height="100"/></g>
  </svg>

  <aside class="details">
    <div class="trip"><h2>Detalhes da Viagem</h2><p>Viagem: 0888910</p><p class="plate-line">Placa:&nbsp; BJW9888</p><p class="id-line">Identificador: 078829</p></div>
    <nav class="tabs">
      <a class="on"><svg width="12" height="18"><use href="#i-pin"/></svg><span>Viagem</span></a>
      <a><svg width="20" height="18"><use href="#i-case"/></svg><span>Entrega</span></a>
      <a><svg width="18" height="20"><use href="#i-file"/></svg><span>NF</span></a>
      <a class="info"><svg width="21" height="16"><use href="#i-laptop"/></svg><span>+ Info</span></a>
    </nav>
    <ul class="list">
      <li><svg class="cal"><use href="#i-cal"/></svg>123456789/112345</li>
      <li><svg class="cal"><use href="#i-cal"/></svg>123456789/112345</li>
      <li><svg class="cal"><use href="#i-cal"/></svg>123456789/112345</li>
      <li><svg class="cal"><use href="#i-cal"/></svg>123456789/112345</li>
      <li><svg class="cal"><use href="#i-cal"/></svg>123456789/112345</li>
      <li><svg class="cal"><use href="#i-cal"/></svg>123456789/112345</li>
      <li><svg class="edit"><use href="#i-edit"/></svg>123456789/112345</li>
      <li><svg class="cal"><use href="#i-cal"/></svg>123456789/112345</li>
      <li><svg class="edit"><use href="#i-edit"/></svg>123456789/112345</li>
      <li><svg class="cal"><use href="#i-cal"/></svg>123456789/112345</li>
      <li><svg class="cal"><use href="#i-cal"/></svg>123456789/112345</li>
      <li><svg class="edit"><use href="#i-edit"/></svg>123456789/112345</li>
      <li><svg class="edit"><use href="#i-edit"/></svg>123456789/112345</li>
      <li><svg class="cal"><use href="#i-cal"/></svg>123456789/112345</li>
      <li><svg class="cal"><use href="#i-cal"/></svg>123456789/112345</li>
      <li><svg class="edit"><use href="#i-edit"/></svg>123456789/112345</li>
      <li><svg class="edit"><use href="#i-edit"/></svg>123456789/112345</li>
      <li><svg class="edit"><use href="#i-edit"/></svg>123456789/112345</li>
    </ul>
    <div class="pages"><b class="on">1</b><b>2</b><b>3</b><b>4</b><b>5</b><b>6</b></div>
  </aside>
</main>
</body>
</html>
```
FILE: styles.css
```css
* { box-sizing: border-box; margin: 0; padding: 0; }
body { width: 1920px; height: 1080px; overflow: hidden; background: #fefefe; font-family: Roboto, "Liberation Sans", sans-serif; color: #111; }
button { border: 0; background: none; }
i, em { font-style: normal; }
.sprite { display: none; }

/* top bar */
.topbar { height: 76px; display: flex; align-items: flex-start; }
.logo { width: 230px; height: 60px; margin: 8px 0 0 24px; }
.logo-text { font: italic bold 50px "Liberation Sans", sans-serif; fill: #0b1b45; stroke: #0b1b45; stroke-width: 2.5; }
.logo-hook { fill: #0b1b45; stroke: #fff; stroke-width: 1; }
.burger { display: flex; flex-direction: column; gap: 5px; width: 31px; margin: 26px 0 0 88px; }
.burger span { height: 5px; border-radius: 1px; background: #1c2a3f; }
.search-pill { display: flex; align-items: center; justify-content: space-between; width: 385px; height: 56px; margin: 12px 0 0 25px; padding: 2px 25px; border-radius: 28px; background: #05a9f7; box-shadow: 0 3px 6px rgba(0,0,0,.22); color: #fff; }
.search-pill h1 { font-size: 29.900px; font-weight: 700; white-space: nowrap; }
.search-pill svg { width: 23px; height: 23px; fill: none; stroke: #fff; stroke-width: 3; stroke-linecap: round; }
.notices { display: flex; margin: 18px 0 0 609px; font-family: "Open Sans", sans-serif; }
.notice { position: relative; width: 77px; height: 42px; padding-top: 13px; }
.notice:nth-child(2) { width: 73px; }
.notice:nth-child(3) { width: 83px; }
.notice svg { width: 23px; height: 22px; fill: #2f2f2f; display: block; }
.notice b { position: absolute; left: 15px; top: 0; width: 24px; height: 24px; border-radius: 2px; background: #d9534f; color: #fff; font-size: 15px; font-weight: 400; line-height: 26px; text-align: center; }
.avatar { width: 42px; height: 42px; margin-top: 18px; border-radius: 50%; background: #666; }
.user { width: 143px; margin: 25px 0 0 16px; font: 18px/25px "Open Sans", sans-serif; color: #4a4a4a; letter-spacing: -.3px; }
.more { display: flex; gap: 1.500px; margin-top: 40px; }
.more i { width: 5px; height: 5px; border-radius: 1px; background: #333; }

.layout { display: grid; grid-template-columns: 322px 515px 123px 700px 260px; height: 1004px; }

/* sidebar */
.sidebar { margin-top: 2px; padding-top: 28px; background: #101010; border-left: 1px solid #0d7fd0; border-top: 1px solid #888; }
.item { display: flex; align-items: center; height: 61px; color: #fff; font-size: 18px; font-weight: 500; padding-right: 15px; }
.item.active { background: #05a9f7; margin-right: -1px; padding-bottom: 1px; }
.item em { margin-left: auto; width: 29px; height: 20px; background: #05a7f5; font: 13px/20px "Open Sans", sans-serif; text-align: center; }
.ico { flex: 0 0 73px; display: flex; justify-content: center; padding-left: 6px; }
.item.first .ico, .item.active .ico { flex-basis: 70px; justify-content: flex-start; padding-left: 22px; }
.item.first .ico { padding-left: 23px; }
.ico svg { height: 25px; fill: #fff; }
.w28 { width: 28px; } .w34 { width: 34px; } .w32 { width: 32px; } .w33 { width: 33px; } .w19 { width: 19px; }
.ico .tall { height: 33px; } .ico .case { height: 28px; }
.ico .w19 { height: 28px; margin-right: 4px; }
.ico .w32 { margin-left: 3px; }
.ico.low { padding-top: 5px; } .ico.high { padding-bottom: 14px; }

/* operations grid */
.grid { margin-top: 3px; --line: #bdbdbd; }
.thead, .row { display: grid; grid-template-columns: 11px 100px 99px 96.500px 103.500px 105px; }
.thead { height: 45px; background: #efefef; font-size: 20px; line-height: 48px; color: #838383; }
.thead i { background: #6b7d8d; }
.thead b:nth-child(2) { padding-left: 13px; }
.thead b:nth-child(3) { padding-left: 38px; }
.thead b:nth-child(4) { padding-left: 14px; }
.thead b:nth-child(5) { padding-left: 15.500px; }
.thead b:nth-child(6) { padding-left: 11px; }
.row { height: 60px; font-size: 16.300px; line-height: 20px; --t: 23px; --s: 24px; --b: 27px; --id: 0px; --x: 2px; }
.row > * + * { border-top: 1px solid #c9c9c9; border-left: 1px solid var(--line); margin-top: -.5px; }
.row > :last-child { border-right: 1px solid var(--line); }
.row span { padding: var(--t) 0 0 calc(18.500px + var(--x)); }
.row span:nth-child(3) { padding: calc(var(--t) + var(--id)) 0 0 19px; }
.row span:nth-child(4) { padding-left: 11.500px; }
.row div { padding: var(--s) 0 0 34px; }
.row div:last-child { padding: calc(var(--b) - 1px) 0 0 15px; }
.dot { display: block; width: 25px; height: 25px; border-radius: 50%; background: #ffcb2f; text-decoration: none; }
.dot.off { background: #8d9cb5; } .dot.sq { border-radius: 8px; }
.bar { display: block; width: 74px; height: 19px; border: 1px solid #d6d6d6; background: linear-gradient(#ff4d41 0 0) 0 0 / 50px 100% no-repeat #fff; }
.bar.ok { background: linear-gradient(#7dff42 0 0) 0 0 / 35px 100% no-repeat #fff; }
.bar.warn { background: linear-gradient(#ffcb2f 0 0) 0 0 / 35px 100% no-repeat #fff; }
.green > i { background: #7dff42; } .red > i { background: #ff4c4b; } .yellow > i { background: #ffed4b; } .bright > i { background: #fff633; }
.selected > :not(i) { background: #aee2fb; }
.selected span { font-weight: 700; }
.row:nth-child(-n+6) { --id: 2px; --x: 0px; }
.row:nth-child(-n+6) span:nth-child(3) { padding-left: 21.500px; }
.row:nth-child(2) { --t: 21px; --s: 20px; --b: 21px; }
.row:nth-child(3) { --t: 20px; --s: 20px; --b: 20px; }
.row:nth-child(4) { --t: 17px; --s: 13px; --b: 18px; }
.row:nth-child(5) { --t: 16px; --s: 18px; --b: 21px; }
.row:nth-child(6) { --t: 15px; --s: 14px; --b: 18px; height: 58px; }
.row:nth-child(6) span:nth-child(4) { padding-top: 17px; }
.row:nth-child(6) > * { margin-top: -1px; }
.row:nth-child(n+7) { --s: 23px; }
.row:nth-child(10) { --t: 24px; --s: 24px; --b: 28px; }
.row:nth-child(11) { --t: 26px; --s: 26px; --b: 30px; }
.row:nth-child(12) { --t: 27px; --s: 27px; --b: 31px; }
.row:nth-child(13) { --t: 24px; --s: 20px; --b: 26px; height: 58px; }
.row:nth-child(14) { --t: 28px; --s: 25px; --b: 30px; }
.row:nth-child(15) { --t: 29px; --s: 26px; --b: 31px; }
.row:nth-child(16) { --t: 21px; --s: 17px; --b: 23px; }
.row:nth-child(17) { --t: 16px; --s: 12px; --b: 18px; }

/* floating actions */
.actions { display: flex; flex-direction: column; gap: 29.300px; padding: 27px 0 0 32px; }
.actions button { display: flex; align-items: center; justify-content: center; flex: none; width: 63px; height: 63px; border-radius: 50%; background: #05a9f7; }
.actions button:first-child { margin-left: -2px; }
.actions button:nth-child(n+5) { margin-left: 1px; }
.actions button:nth-child(n+6) { margin-left: 2px; }
.actions button:last-child { margin-left: 1px; }
.actions .shadow { box-shadow: 0 3px 5px rgba(0,0,0,.22); }
.actions .glow { margin: -4px 0 0 0; background: #2fb2f4; box-shadow: 0 0 4px 1px #2fb2f4, 0 4px 7px rgba(0,0,0,.25); }
.actions svg { width: 38px; height: 30px; fill: #fff; }
.actions button:not(.glow) svg { margin-bottom: 4px; }
.actions .glow svg { width: 22px; height: 33px; }

/* map */
.map { --y: #ffefac; width: 700px; height: 963px; margin-top: 3px; font-family: Roboto, sans-serif; }
.map path, .map circle { stroke-linejoin: round; }
.streets { fill: none; stroke: #fff; stroke-width: 10; }
.majors { fill: none; stroke: #fff; }
.w14 { stroke-width: 14; } .w18 { stroke-width: 19; } .w22 { stroke-width: 24; } .w24 { stroke-width: 26; } .w26 { stroke-width: 25; } .w30 { stroke-width: 30; } .w40 { stroke-width: 40; } .w50 { stroke-width: 50; }
.ring { stroke-width: 18; fill: #ececec; }
.water { fill: #a9d9fd; }
.rail { fill: none; stroke: #dedede; stroke-width: 22; }
.park { fill: none; stroke: #8fd0a0; stroke-width: 3; }
.dashed { stroke-dasharray: 16 9; stroke-width: 4; }
.hw-edge, .hw-fill, .hw-mid, .hw2-edge, .hw2-fill, .hw2-mid, .yr-edge, .yr-fill { fill: none; }
.hw-edge { stroke: #f6d377; stroke-width: 66; }
.hw-fill { stroke: var(--y); stroke-width: 58; } .hw-mid { stroke: #f6d377; stroke-width: 6; }
.hw2-edge { stroke: #f6d377; stroke-width: 44; } .hw2-fill { stroke: var(--y); stroke-width: 36; } .hw2-mid { stroke: #f6d377; stroke-width: 4; }
.yr-edge { stroke: #f6d377; stroke-width: 27; } .yr-fill { stroke: var(--y); stroke-width: 19; }
.labels { font-size: 53px; paint-order: stroke; stroke: #fff; stroke-opacity: .8; stroke-width: 7; stroke-linejoin: round; }
.road { font-size: 38px; fill: #808488; stroke: #ececec; } .road .dark { font-size: 42px; fill: #6f7a82; }
.area { font-weight: 700; fill: #6d7d90; stroke-width: 4; }
.teal { fill: #178f97; } .slate { fill: #6b808d; } .orange { fill: #d9805a; }
.green.labels { fill: #26872f; } .transit { fill: #2096d3; } .shop { fill: #4a79bd; }
.plate rect { fill: #fff; stroke: #777; stroke-width: 4; }
.plate text { font-size: 35px; font-weight: 500; text-anchor: middle; fill: #444; }
.pin-shadow { fill: #000; opacity: .12; }
.vehicle { fill: #05a9f7; }

/* trip details */
.trip { height: 135px; padding-top: 20px; background: #a7dcf5; border-top: 1px solid #9bc9df; text-align: center; font-size: 14px; font-weight: 500; color: #000; }
.trip h2 { font-size: 16px; font-weight: 700; line-height: 22px; margin-bottom: 8px; padding-right: 1px; }
.trip p { line-height: 23.600px; padding-right: 4px; }
.trip .plate-line { padding-right: 20px; } .trip .id-line { padding-right: 2px; }
.tabs { display: grid; grid-template-columns: 51px 68px 54px 60px; padding-left: 16px; height: 44px; background: #f2f2f2; font-size: 14px; font-weight: 500; color: #000; }
.tabs a { display: flex; flex-direction: column; align-items: center; padding-top: 7px; }
.tabs svg { height: 20px; flex: none; margin-bottom: 3px; }
.tabs .on svg { margin-right: 7px; }
.tabs .info svg { margin-left: 5px; }
.tabs span { line-height: 16px; white-space: nowrap; }
.tabs .on span { border-bottom: 3px solid #05a9f7; padding-bottom: 1px; }
.list { list-style: none; padding: 33px 0 0 55px; height: 771px; font-size: 12px; }
.list li { display: flex; align-items: flex-start; gap: 14px; height: 42px; line-height: 16px; --dy: -4px; }
.list svg { width: 22px; margin-top: var(--dy); flex: none; }
.cal { height: 22px; fill: #1aff1a; } .edit { height: 18px; fill: #ff3131; }
.list li:nth-child(n+11) { padding-left: 3px; }
.list li:nth-child(4), .list li:nth-child(9) { height: 36px; }
.list li:nth-child(5) { height: 38px; --dy: -3px; }
.list li:nth-child(10) { height: 43px; --dy: -3px; }
.list li:nth-child(2) { --dy: -6px; }
.list li:nth-child(3), .list li:nth-child(8), .list li:nth-child(9) { --dy: -7px; }
.list li:nth-child(4), .list li:nth-child(14) { --dy: -8px; }
.list li:nth-child(13) { --dy: -5.500px; }
.list li:nth-child(14) { height: 36px; }
.list li:nth-child(15) { height: 38px; --dy: -2px; }
.list li:nth-child(16) { --dy: -2.500px; }
.list li:nth-child(17) { height: 39px; }
.list li:nth-child(18) { --dy: -3px; }
.pages { display: flex; gap: 4.400px; padding-left: 67.500px; }
.pages b { width: 19px; height: 19px; background: #d9d9d9; font-size: 10px; line-height: 19px; text-align: center; }
.pages .on { background: #a6a6a6; }
```
